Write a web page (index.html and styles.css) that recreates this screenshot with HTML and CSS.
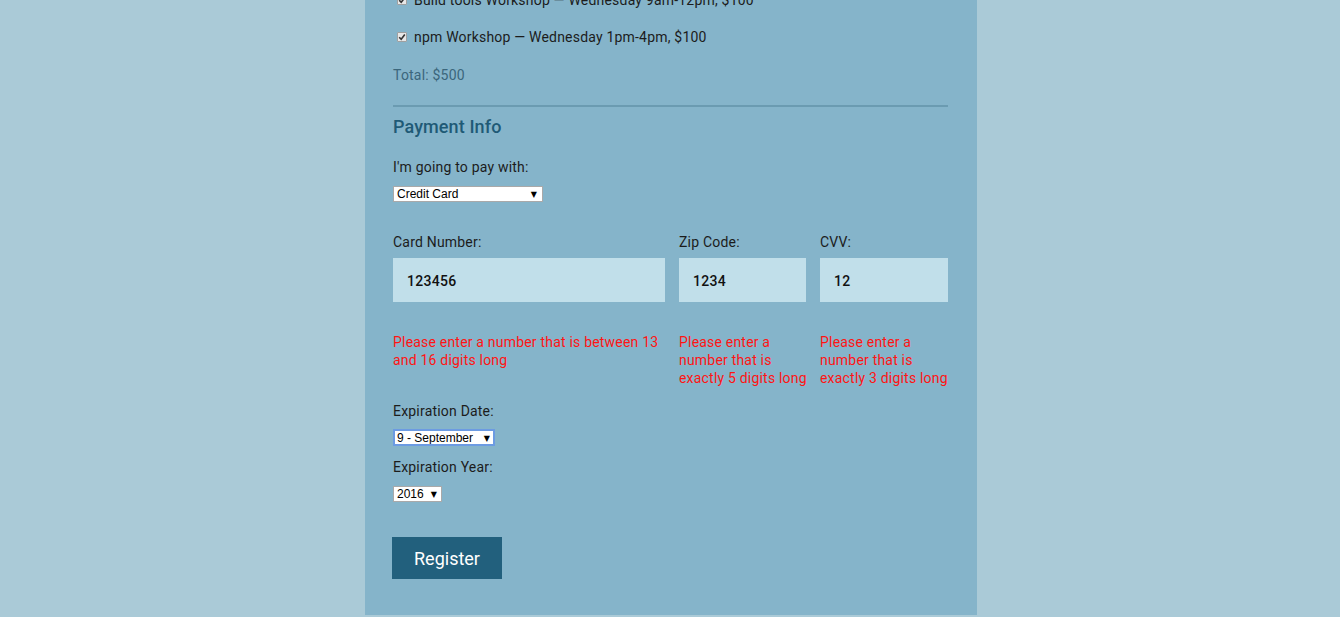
FILE: index.html
```html
<!DOCTYPE html>
<html lang="en">
<head>
<meta charset="utf-8">
<title>Registration</title>
<link rel="stylesheet" href="styles.css">
</head>
<body>
<div class="panel">
  <div class="activities">
    <label class="activity"><span class="check"><svg viewBox="0 0 10 10" width="10" height="10"><path d="M2.2 5.2 L4.2 7.3 L7.8 2.6" fill="none" stroke="#333" stroke-width="1.6"/></svg></span>Build tools Workshop — Wednesday 9am-12pm, $100</label>
    <label class="activity"><span class="check"><svg viewBox="0 0 10 10" width="10" height="10"><path d="M2.2 5.2 L4.2 7.3 L7.8 2.6" fill="none" stroke="#333" stroke-width="1.6"/></svg></span>npm Workshop — Wednesday 1pm-4pm, $100</label>
    <p class="total">Total: $500</p>
  </div>
  <hr class="divider">
  <h2 class="legend">Payment Info</h2>
  <label class="label label-pay">I'm going to pay with:</label>
  <span class="select-wrap sel-pay"><select class="select"><option>Credit Card</option></select></span>

  <div class="card-grid">
    <div class="field">
      <label class="label">Card Number:</label>
      <input class="text-input" type="text" value="123456">
      <p class="error">Please enter a number that is between 13 and 16 digits long</p>
    </div>
    <div class="field">
      <label class="label">Zip Code:</label>
      <input class="text-input" type="text" value="1234">
      <p class="error">Please enter a number that is exactly 5 digits long</p>
    </div>
    <div class="field">
      <label class="label">CVV:</label>
      <input class="text-input" type="text" value="12">
      <p class="error">Please enter a number that is exactly 3 digits long</p>
    </div>
  </div>

  <label class="label label-exp">Expiration Date:</label>
  <span class="select-wrap sel-month"><select class="select focused"><option>9 - September</option></select></span>
  <label class="label label-year">Expiration Year:</label>
  <span class="select-wrap sel-year"><select class="select"><option>2016</option></select></span>

  <button class="register" type="button">Register</button>
</div>
</body>
</html>
```
FILE: styles.css
```css
* { box-sizing: border-box; }
html, body { margin: 0; padding: 0; }
body {
  background: #aacad7;
  font-family: Roboto, "Liberation Sans", sans-serif;
  font-size: 14px;
  letter-spacing: 0.2px;
  color: #1c1c1c;
}
.panel {
  width: 612px;
  margin: 0 0 0 calc(50% - 305px);
  background: #85b4ca;
  padding: 0 29px 36px 28px;
  display: flex;
  flex-direction: column;
  align-items: flex-start;
}
.activities {
  margin-top: -9px;
  display: flex;
  flex-direction: column;
}
.activity {
  display: flex;
  align-items: center;
  height: 18px;
  line-height: 18px;
  margin-bottom: 19px;
}
.activity:nth-child(2) { margin-bottom: 20px; }
.check {
  display: inline-flex;
  width: 10px;
  height: 10px;
  margin-left: 4px;
  margin-right: 7px;
  background: #e8e8e8;
  border: 1px solid #a0a0a0;
  border-radius: 1px;
  position: relative;
}
.check svg { position: absolute; left: -1px; top: -1px; }
.total {
  margin: 0;
  line-height: 18px;
  color: #3b667c;
}
.divider {
  width: 100%;
  margin: 21px 0 0;
  border: 0;
  height: 2px;
  background: #6b9bb1;
}
.legend {
  margin: 9px 0 0;
  font-size: 18px;
  line-height: 22px;
  font-weight: 500;
  letter-spacing: 0.1px;
  color: #1f5a76;
}
.label {
  display: block;
  line-height: 18px;
}
.label-pay { margin-top: 20px; }
.select-wrap {
  position: relative;
  display: inline-block;
  letter-spacing: 0;
}
.select-wrap::after {
  content: "▼";
  position: absolute;
  right: 5px;
  top: 50%;
  transform: translateY(-50%);
  font-size: 8px;
  font-family: "DejaVu Sans", sans-serif;
  color: #000;
  pointer-events: none;
}
.select {
  appearance: none;
  -webkit-appearance: none;
  display: block;
  height: 16px;
  margin: 0;
  padding: 0 0 0 3px;
  background: #fff;
  border: 1px solid #a9a9a9;
  border-radius: 0;
  font-family: "Liberation Sans", Arial, sans-serif;
  font-size: 12px;
  line-height: 14px;
  color: #000;
}
.sel-pay { margin-top: 10px; }
.sel-pay .select { width: 150px; }
.sel-pay::after { right: 6px; }
.sel-month { margin-top: 9px; }
.sel-month .select { width: 102px; height: 17px; padding-left: 2px; }
.sel-year { margin-top: 10px; }
.sel-year .select { width: 49px; }
.select.focused {
  border: 2px solid #6c9be2;
}
.card-grid {
  margin-top: 31px;
  width: 100%;
  display: grid;
  grid-template-columns: 272px 127px 128px;
  column-gap: 14px;
}
.field {
  display: flex;
  flex-direction: column;
}
.text-input {
  margin-top: 7px;
  height: 44px;
  width: 100%;
  border: 0;
  background: #c1dfea;
  padding: 2px 14px 0;
  font-family: Roboto, "Liberation Sans", sans-serif;
  font-size: 14px;
  font-weight: 500;
  letter-spacing: 0.3px;
  color: #111;
  outline: none;
}
.error {
  margin: 31px -6px 0 0;
  line-height: 18px;
  color: #ff1414;
}
.label-exp { margin-top: 15px; }
.label-year { margin-top: 12px; }
.register {
  margin-top: 35px;
  margin-left: -1px;
  width: 110px;
  height: 42px;
  border: 0;
  background: #22607d;
  color: #fff;
  font-family: Roboto, "Liberation Sans", sans-serif;
  font-size: 18px;
  padding: 0;
  cursor: pointer;
}
```
